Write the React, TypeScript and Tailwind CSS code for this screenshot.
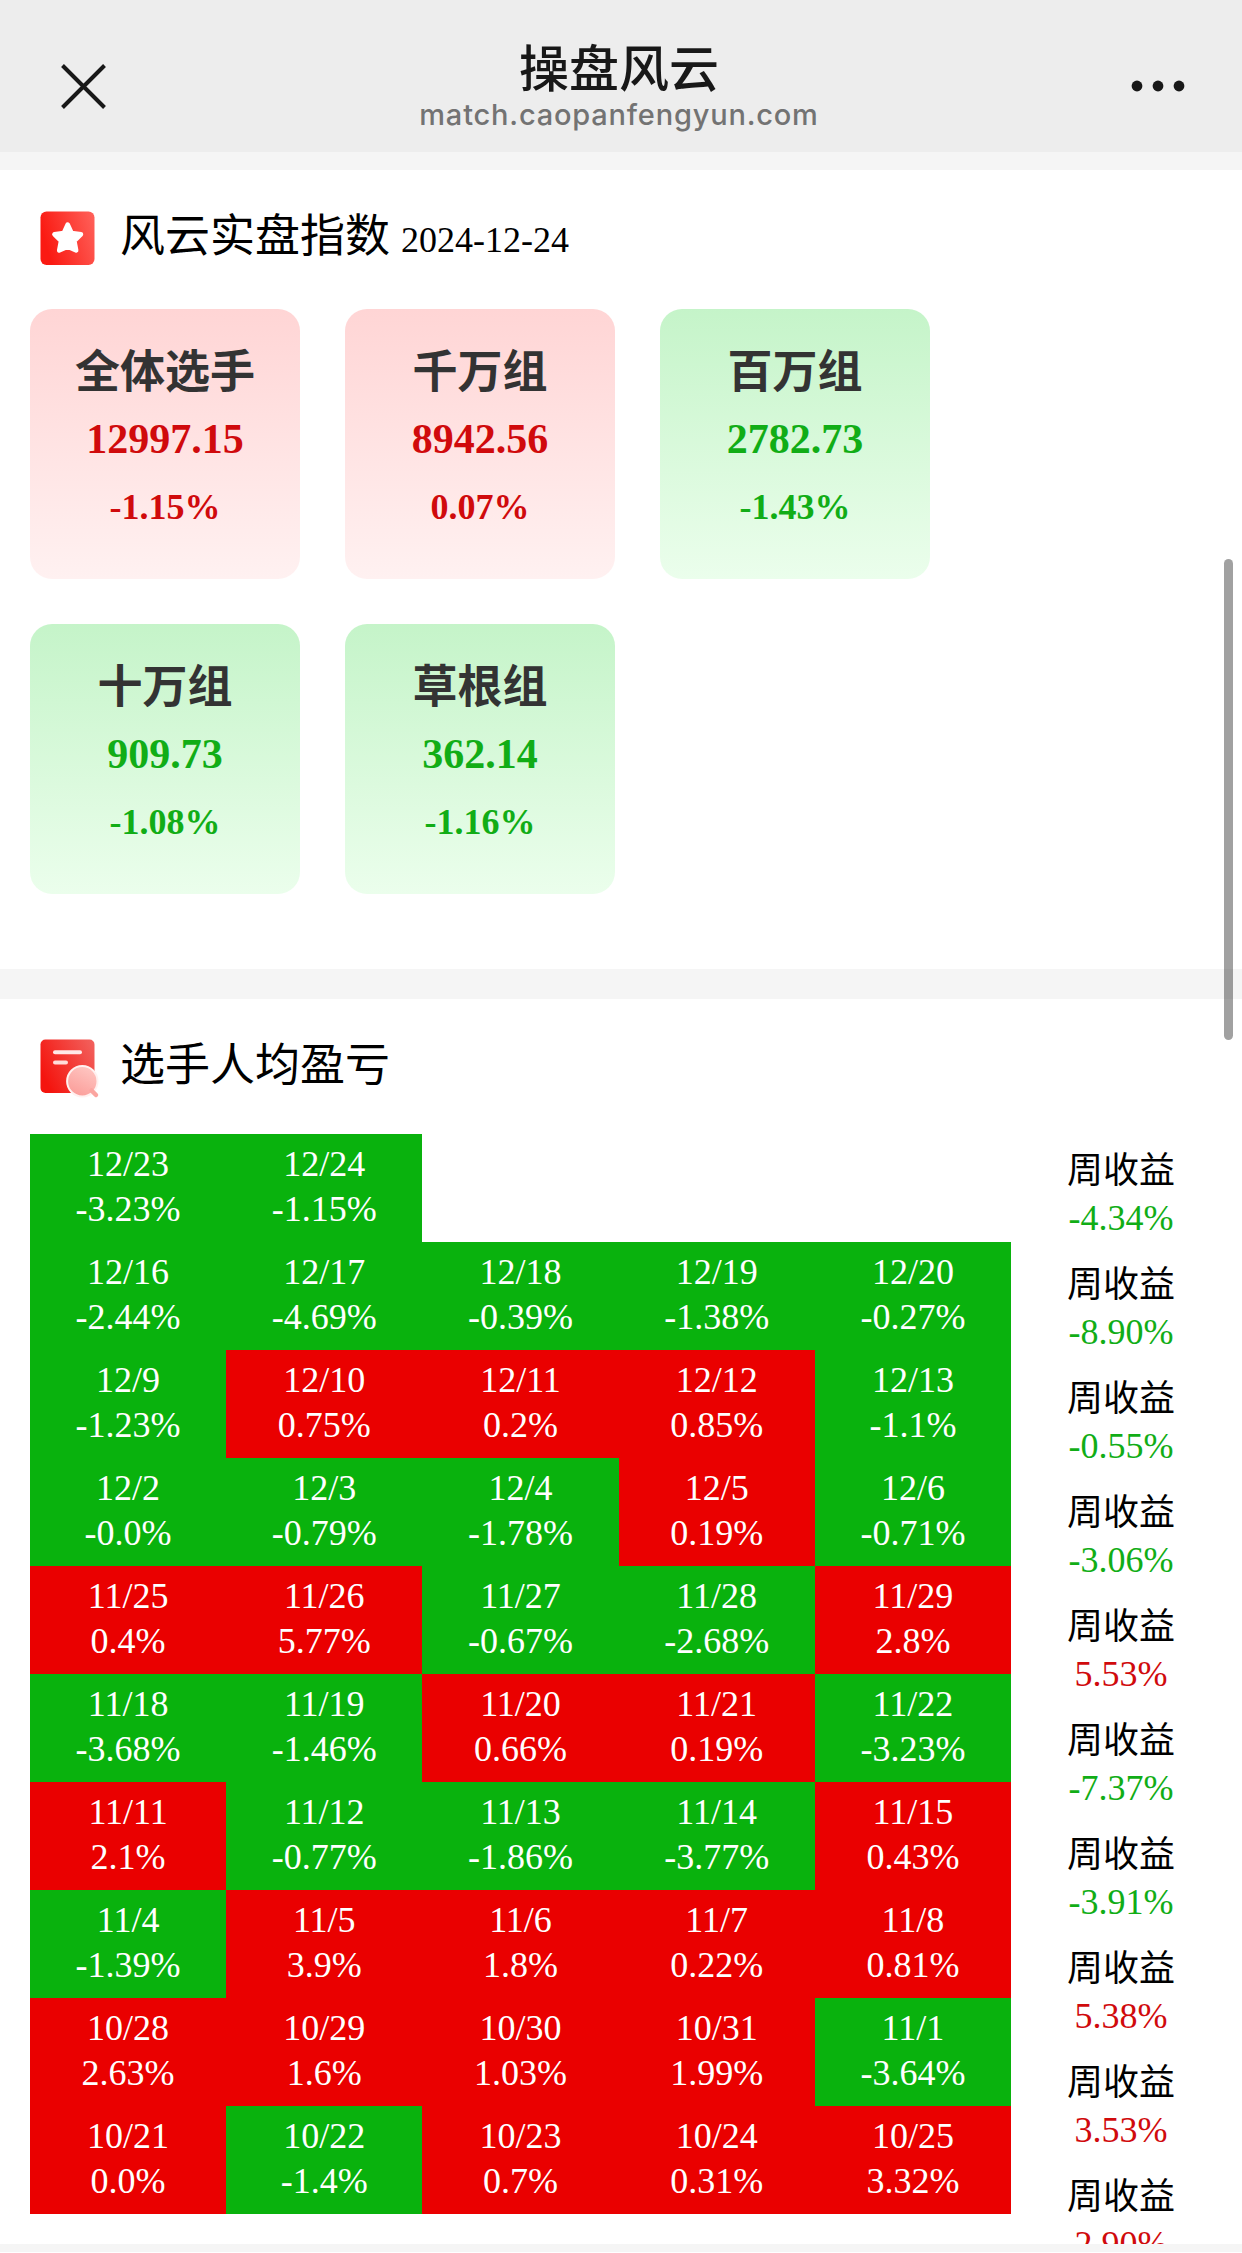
import React from 'react';

const groups = [
  { name: '全体选手', value: '12997.15', change: '-1.15%', up: true },
  { name: '千万组', value: '8942.56', change: '0.07%', up: true },
  { name: '百万组', value: '2782.73', change: '-1.43%', up: false },
  { name: '十万组', value: '909.73', change: '-1.08%', up: false },
  { name: '草根组', value: '362.14', change: '-1.16%', up: false }
];

// r = red (gain), g = green (loss)
const weeks = [
  { total: '-4.34%', days: [['12/23', '-3.23%', 'g'], ['12/24', '-1.15%', 'g']] },
  { total: '-8.90%', days: [['12/16', '-2.44%', 'g'], ['12/17', '-4.69%', 'g'], ['12/18', '-0.39%', 'g'], ['12/19', '-1.38%', 'g'], ['12/20', '-0.27%', 'g']] },
  { total: '-0.55%', days: [['12/9', '-1.23%', 'g'], ['12/10', '0.75%', 'r'], ['12/11', '0.2%', 'r'], ['12/12', '0.85%', 'r'], ['12/13', '-1.1%', 'g']] },
  { total: '-3.06%', days: [['12/2', '-0.0%', 'g'], ['12/3', '-0.79%', 'g'], ['12/4', '-1.78%', 'g'], ['12/5', '0.19%', 'r'], ['12/6', '-0.71%', 'g']] },
  { total: '5.53%', days: [['11/25', '0.4%', 'r'], ['11/26', '5.77%', 'r'], ['11/27', '-0.67%', 'g'], ['11/28', '-2.68%', 'g'], ['11/29', '2.8%', 'r']] },
  { total: '-7.37%', days: [['11/18', '-3.68%', 'g'], ['11/19', '-1.46%', 'g'], ['11/20', '0.66%', 'r'], ['11/21', '0.19%', 'r'], ['11/22', '-3.23%', 'g']] },
  { total: '-3.91%', days: [['11/11', '2.1%', 'r'], ['11/12', '-0.77%', 'g'], ['11/13', '-1.86%', 'g'], ['11/14', '-3.77%', 'g'], ['11/15', '0.43%', 'r']] },
  { total: '5.38%', days: [['11/4', '-1.39%', 'g'], ['11/5', '3.9%', 'r'], ['11/6', '1.8%', 'r'], ['11/7', '0.22%', 'r'], ['11/8', '0.81%', 'r']] },
  { total: '3.53%', days: [['10/28', '2.63%', 'r'], ['10/29', '1.6%', 'r'], ['10/30', '1.03%', 'r'], ['10/31', '1.99%', 'r'], ['11/1', '-3.64%', 'g']] },
  { total: '2.90%', days: [['10/21', '0.0%', 'r'], ['10/22', '-1.4%', 'g'], ['10/23', '0.7%', 'r'], ['10/24', '0.31%', 'r'], ['10/25', '3.32%', 'r']] }
];

const StarIcon = () => (
  <svg className="mt-[7px] ml-10 h-[54px] w-[60px] shrink-0" viewBox="0 0 60 54">
    <defs>
      <linearGradient id="starBg" x1="0" y1="0.3" x2="1" y2="0">
        <stop offset="0" stopColor="#fa1a12" />
        <stop offset="1" stopColor="#ff625b" />
      </linearGradient>
    </defs>
    <rect x="0.5" y="0.5" width="54" height="53.5" rx="6" fill="url(#starBg)" />
    <path
      d="M27.7 13.5 L31.6 22 L41 23.3 L34.4 29.8 L36.2 39.5 L27.7 35.6 L19.2 39.5 L21 29.8 L14.4 23.3 L23.8 22 Z"
      fill="#fff"
      stroke="#fff"
      strokeWidth="4.5"
      strokeLinejoin="round"
    />
  </svg>
);

const ReportIcon = () => (
  <svg className="mt-[5px] ml-10 h-[60px] w-[60px] shrink-0" viewBox="0 0 60 60">
    <defs>
      <linearGradient id="reportBg" x1="0" y1="0.6" x2="1" y2="0.1">
        <stop offset="0" stopColor="#f4140e" />
        <stop offset="1" stopColor="#f2605c" />
      </linearGradient>
      <linearGradient id="lensBg" x1="0.8" y1="0" x2="0.3" y2="1">
        <stop offset="0" stopColor="#ffc8c4" />
        <stop offset="1" stopColor="#fb9d99" />
      </linearGradient>
    </defs>
    <rect x="0.5" y="0.5" width="54" height="53.5" rx="5" fill="url(#reportBg)" />
    <path d="M15 13.2 H40" stroke="#ffe9e8" strokeWidth="4" strokeLinecap="round" />
    <path d="M15 23.4 H26" stroke="#ffdcda" strokeWidth="4" strokeLinecap="round" />
    <circle cx="42.3" cy="42.2" r="15.2" fill="url(#lensBg)" stroke="#fff1f0" strokeWidth="2" />
    <path d="M51.5 51.5 L56 56" stroke="#fba5a0" strokeWidth="4.5" strokeLinecap="round" />
  </svg>
);

const Header = () => (
  <header className="flex h-[152px] justify-between bg-[#ededed]">
    <svg className="mt-[63px] ml-[60px] h-[47px] w-[47px]" viewBox="0 0 47 47">
      <path d="M2.5 2.5 L44.5 44.5 M44.5 2.5 L2.5 44.5" stroke="#181818" strokeWidth="4" />
    </svg>
    <div className="flex flex-col items-center pt-[33px]">
      <h1 className="text-[50px] leading-[64px] font-medium text-[#181818]">操盘风云</h1>
      <p className="mt-px font-['Inter'] text-[29px] leading-[34px] font-medium tracking-[0.8px] text-[#737373]">match.caopanfengyun.com</p>
    </div>
    <svg className="mt-[80px] mr-[57px] h-[12px] w-[54px]" viewBox="0 0 54 12">
      <circle cx="6" cy="6" r="5.4" fill="#181818" />
      <circle cx="27" cy="6" r="5.4" fill="#181818" />
      <circle cx="48" cy="6" r="5.4" fill="#181818" />
    </svg>
  </header>
);

const App = () => {
  return (
    <div className="relative h-[2253px] w-[1242px] overflow-hidden bg-white font-['Liberation_Serif','Noto_Sans_CJK_SC',serif] text-black">
      <div className="font-['Noto_Sans_CJK_SC',sans-serif]">
        <Header />
      </div>
      <div className="h-[18px] bg-[#f5f5f5]" />

      {/* Index by group */}
      <section className="h-[799px] pt-[34px]">
        <div className="flex h-[54px] items-start">
          <StarIcon />
          <div className="mt-[2px] ml-5 flex items-baseline">
            <h2 className="font-['Noto_Sans_CJK_SC',sans-serif] text-[45px] leading-[54px]">风云实盘指数</h2>
            <span className="ml-[11px] text-[36px] leading-[54px]">2024-12-24</span>
          </div>
        </div>
        <div className="mt-[51px] ml-[30px] flex w-[945px] flex-wrap gap-[45px]">
          {groups.map((group) => (
            <div
              key={group.name}
              className={`h-[270px] w-[270px] rounded-[22px] bg-linear-to-b pt-[26px] text-center font-bold ${
                group.up ? 'from-[#ffd5d5] to-[#fff1f1] text-[#d00a0c]' : 'from-[#c5f4c9] to-[#ebfeec] text-[#11ad16]'
              }`}
            >
              <h3 className="font-['Noto_Sans_CJK_SC',sans-serif] text-[45px] leading-[68px] font-bold text-[#333]">{group.name}</h3>
              <p className="text-[42px] leading-[72px]">{group.value}</p>
              <p className="text-[36px] leading-[64px]">{group.change}</p>
            </div>
          ))}
        </div>
      </section>
      <div className="h-[30px] bg-[#f5f5f5]" />

      {/* Average profit calendar */}
      <section className="h-[1245px] overflow-hidden pt-[35px]">
        <div className="flex h-[54px] items-start">
          <ReportIcon />
          <h2 className="mt-px ml-5 font-['Noto_Sans_CJK_SC',sans-serif] text-[45px] leading-[54px]">选手人均盈亏</h2>
        </div>
        <div className="mt-[46px] ml-[30px] flex items-start text-[36px]">
          <div className="w-[981px]">
            {weeks.map((week) => (
              <div key={week.total} className="grid h-[108px] grid-cols-5">
                {week.days.map(([date, change, color]) => (
                  <div key={date} className={`pt-2 text-center leading-[45px] text-white ${color === 'r' ? 'bg-[#ea0000]' : 'bg-[#09b20d]'}`}>
                    <p>{date}</p>
                    <p>{change}</p>
                  </div>
                ))}
              </div>
            ))}
          </div>
          <div className="w-[220px] pt-2 text-center leading-[51px]">
            {weeks.map((week) => (
              <div key={week.total} className="h-[114px]">
                <p className="font-['Noto_Sans_CJK_SC',sans-serif]">周收益</p>
                <p className={week.total.startsWith('-') ? 'text-[#11ad16]' : 'text-[#d00a0c]'}>{week.total}</p>
              </div>
            ))}
          </div>
        </div>
      </section>
      <div className="h-2 bg-[#f5f5f5]" />

      {/* Scroll indicator */}
      <div className="absolute top-[559px] right-[9px] h-[481px] w-[9px] rounded-full bg-black/37" />
    </div>
  );
};

export default App;
